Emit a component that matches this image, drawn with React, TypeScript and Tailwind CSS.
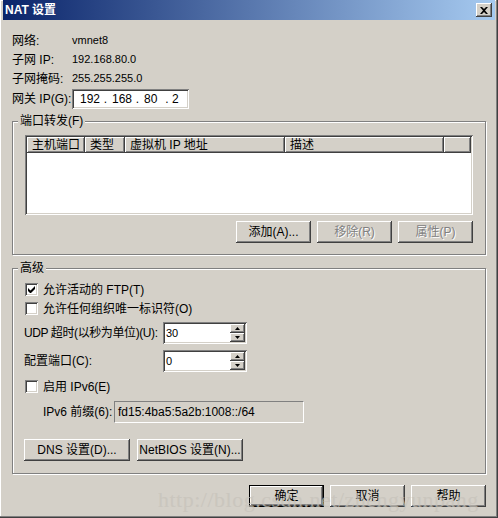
import React from 'react';

const raised =
  'shadow-[inset_-1px_-1px_#404040,inset_1px_1px_#ffffff,inset_-2px_-2px_#808080,inset_2px_2px_#d4d0c8]';
const sunken =
  'shadow-[inset_1px_1px_#808080,inset_-1px_-1px_#ffffff,inset_2px_2px_#404040,inset_-2px_-2px_#d4d0c8]';

const Button: React.FC<{
  children: React.ReactNode;
  w?: string;
  disabled?: boolean;
  primary?: boolean;
}> = ({ children, w = 'w-[75px]', disabled, primary }) => (
  <div
    className={`${w} h-[22px] flex items-center justify-center whitespace-nowrap bg-[#d4d0c8] ${
      primary
        ? 'border border-black shadow-[inset_-1px_-1px_#404040,inset_1px_1px_#ffffff,inset_-2px_-2px_#808080]'
        : raised
    } ${disabled ? 'text-[#808080] [text-shadow:1px_1px_#ffffff]' : 'text-black'}`}
  >
    {children}
  </div>
);

const Checkbox: React.FC<{ checked?: boolean; label: string }> = ({ checked, label }) => (
  <div className="flex items-center h-[13px]">
    <div className={`w-[13px] h-[13px] bg-white ${sunken} flex items-center justify-center`}>
      {checked && (
        <svg width="7" height="7" viewBox="0 0 7 7">
          <path d="M0 2v3l2 2h1l4-4V0L2.5 4.5z" fill="#000" />
        </svg>
      )}
    </div>
    <span className="ml-[5px] whitespace-nowrap">{label}</span>
  </div>
);

const SpinArrow: React.FC<{ up?: boolean }> = ({ up }) => (
  <div className={`flex-1 flex items-center justify-center bg-[#d4d0c8] ${raised}`}>
    <svg width="5" height="3" viewBox="0 0 5 3">
      <path d={up ? 'M2.5 0L5 3H0z' : 'M0 0h5L2.5 3z'} fill="#000" />
    </svg>
  </div>
);

const Spinner: React.FC<{ value: string }> = ({ value }) => (
  <div className={`w-[84px] h-[22px] bg-white ${sunken} flex p-[2px]`}>
    <div className="flex-1 flex items-center pl-[1px] text-[11px]">{value}</div>
    <div className="w-[15px] flex flex-col">
      <SpinArrow up />
      <SpinArrow />
    </div>
  </div>
);

const Group: React.FC<{ title: string; className?: string; children: React.ReactNode }> = ({
  title,
  className = '',
  children,
}) => (
  <div
    className={`relative border border-[#808080] shadow-[inset_1px_1px_#ffffff,1px_1px_#ffffff] ${className}`}
  >
    <span className="absolute -top-[9px] left-[5px] px-[2px] bg-[#d4d0c8] leading-[16px]">
      {title}
    </span>
    {children}
  </div>
);

const HeaderCell: React.FC<{ w: string; children?: React.ReactNode }> = ({ w, children }) => (
  <div className={`${w} h-[16px] flex items-center pl-[5px] whitespace-nowrap ${raised}`}>
    {children}
  </div>
);

export default function App() {
  return (
    <div
      className="relative w-[498px] h-[518px] bg-[#d4d0c8] text-[12px] text-black px-[3px] pb-[3px] flex flex-col shadow-[inset_-1px_-1px_#404040,inset_-2px_-2px_#808080,inset_1px_1px_#ffffff]"
      style={{ fontFamily: '"Liberation Sans", "Noto Sans CJK SC", sans-serif' }}
    >
      {/* title bar */}
      <div className="h-[20px] flex items-center justify-between pl-[2px] pr-[3px] bg-[linear-gradient(to_right,#0a246a,#a6caf0)]">
        <span className="font-bold text-white text-[12px]">NAT 设置</span>
        <div className={`w-[16px] h-[14px] bg-[#d4d0c8] ${raised} flex items-center justify-center`}>
          <svg width="8" height="7" viewBox="0 0 8 7">
            <path d="M0 0h2l2 2 2-2h2L5 3.5 8 7H6L4 5 2 7H0l3-3.5z" fill="#000" />
          </svg>
        </div>
      </div>

      <div className="flex-1 flex flex-col px-[9px]">
        {/* network info */}
        <div className="mt-[11px] flex flex-col">
          <div className="h-[19px] flex items-center">
            <span className="w-[60px]">网络:</span>
            <span className="text-[11px]">vmnet8</span>
          </div>
          <div className="h-[19px] flex items-center">
            <span className="w-[60px]">子网 IP:</span>
            <span className="text-[11px]">192.168.80.0</span>
          </div>
          <div className="h-[19px] flex items-center">
            <span className="w-[60px]">子网掩码:</span>
            <span className="text-[11px]">255.255.255.0</span>
          </div>
          <div className="h-[22px] flex items-center">
            <span className="w-[60px] whitespace-nowrap">网关 IP(G):</span>
            <div className={`w-[117px] h-[20px] bg-white ${sunken} flex items-center pl-[8px]`}>
              <span className="w-[19px]">192</span>
              <span className="w-[13px] text-center">.</span>
              <span className="w-[19px]">168</span>
              <span className="w-[13px] text-center">.</span>
              <span className="w-[18px]">80</span>
              <span className="w-[10px] text-center">.</span>
              <span className="w-[8px]">2</span>
            </div>
          </div>
        </div>

        {/* port forwarding */}
        <Group title="端口转发(F)" className="mt-[11px] px-[12px] pt-[13px] pb-[11px]">
          <div className={`h-[80px] bg-white ${sunken} p-[2px] flex flex-col`}>
            <div className="flex bg-[#d4d0c8]">
              <HeaderCell w="w-[58px]">主机端口</HeaderCell>
              <HeaderCell w="w-[40px]">类型</HeaderCell>
              <HeaderCell w="w-[160px]">虚拟机 IP 地址</HeaderCell>
              <HeaderCell w="w-[159px]">描述</HeaderCell>
              <HeaderCell w="flex-1" />
            </div>
          </div>
          <div className="mt-[6px] flex justify-end gap-[6px]">
            <Button>添加(A)...</Button>
            <Button disabled>移除(R)</Button>
            <Button disabled>属性(P)</Button>
          </div>
        </Group>

        {/* advanced */}
        <Group title="高级" className="mt-[13px] px-[12px] pt-[14px] pb-[12px] flex flex-col">
          <Checkbox checked label="允许活动的 FTP(T)" />
          <div className="mt-[6px]">
            <Checkbox label="允许任何组织唯一标识符(O)" />
          </div>
          <div className="mt-[7px] flex items-center">
            <span className="w-[139px] -ml-[1px] whitespace-nowrap tracking-[-0.4px]">
              UDP 超时(以秒为单位)(U):
            </span>
            <Spinner value="30" />
          </div>
          <div className="mt-[6px] flex items-center">
            <span className="w-[139px] -ml-[1px] whitespace-nowrap">配置端口(C):</span>
            <Spinner value="0" />
          </div>
          <div className="mt-[8px]">
            <Checkbox label="启用 IPv6(E)" />
          </div>
          <div className="mt-[8px] flex items-center pl-[18px]">
            <span className="w-[71px] whitespace-nowrap">IPv6 前缀(6):</span>
            <div className="w-[190px] h-[22px] border border-t-[#808080] border-l-[#808080] border-b-white border-r-white flex items-center pl-[3px]">
              fd15:4ba5:5a2b:1008::/64
            </div>
          </div>
          <div className="mt-[16px] flex gap-[7px] -ml-[1px]">
            <Button w="w-[106px]">DNS 设置(D)...</Button>
            <Button w="w-[106px]">NetBIOS 设置(N)...</Button>
          </div>
        </Group>

        {/* dialog buttons */}
        <div className="mt-[11px] flex justify-end gap-[6px]">
          <Button primary>确定</Button>
          <Button>取消</Button>
          <Button>帮助</Button>
        </div>
      </div>

      <span
        className="pointer-events-none absolute left-[158px] top-[483px] text-[22px] text-[#c6c2ba] tracking-[0.5px] whitespace-nowrap opacity-70"
        style={{ fontFamily: '"Liberation Serif", serif' }}
      >
        http://blog.csdn.net/zhengyunpang
      </span>
    </div>
  );
}
